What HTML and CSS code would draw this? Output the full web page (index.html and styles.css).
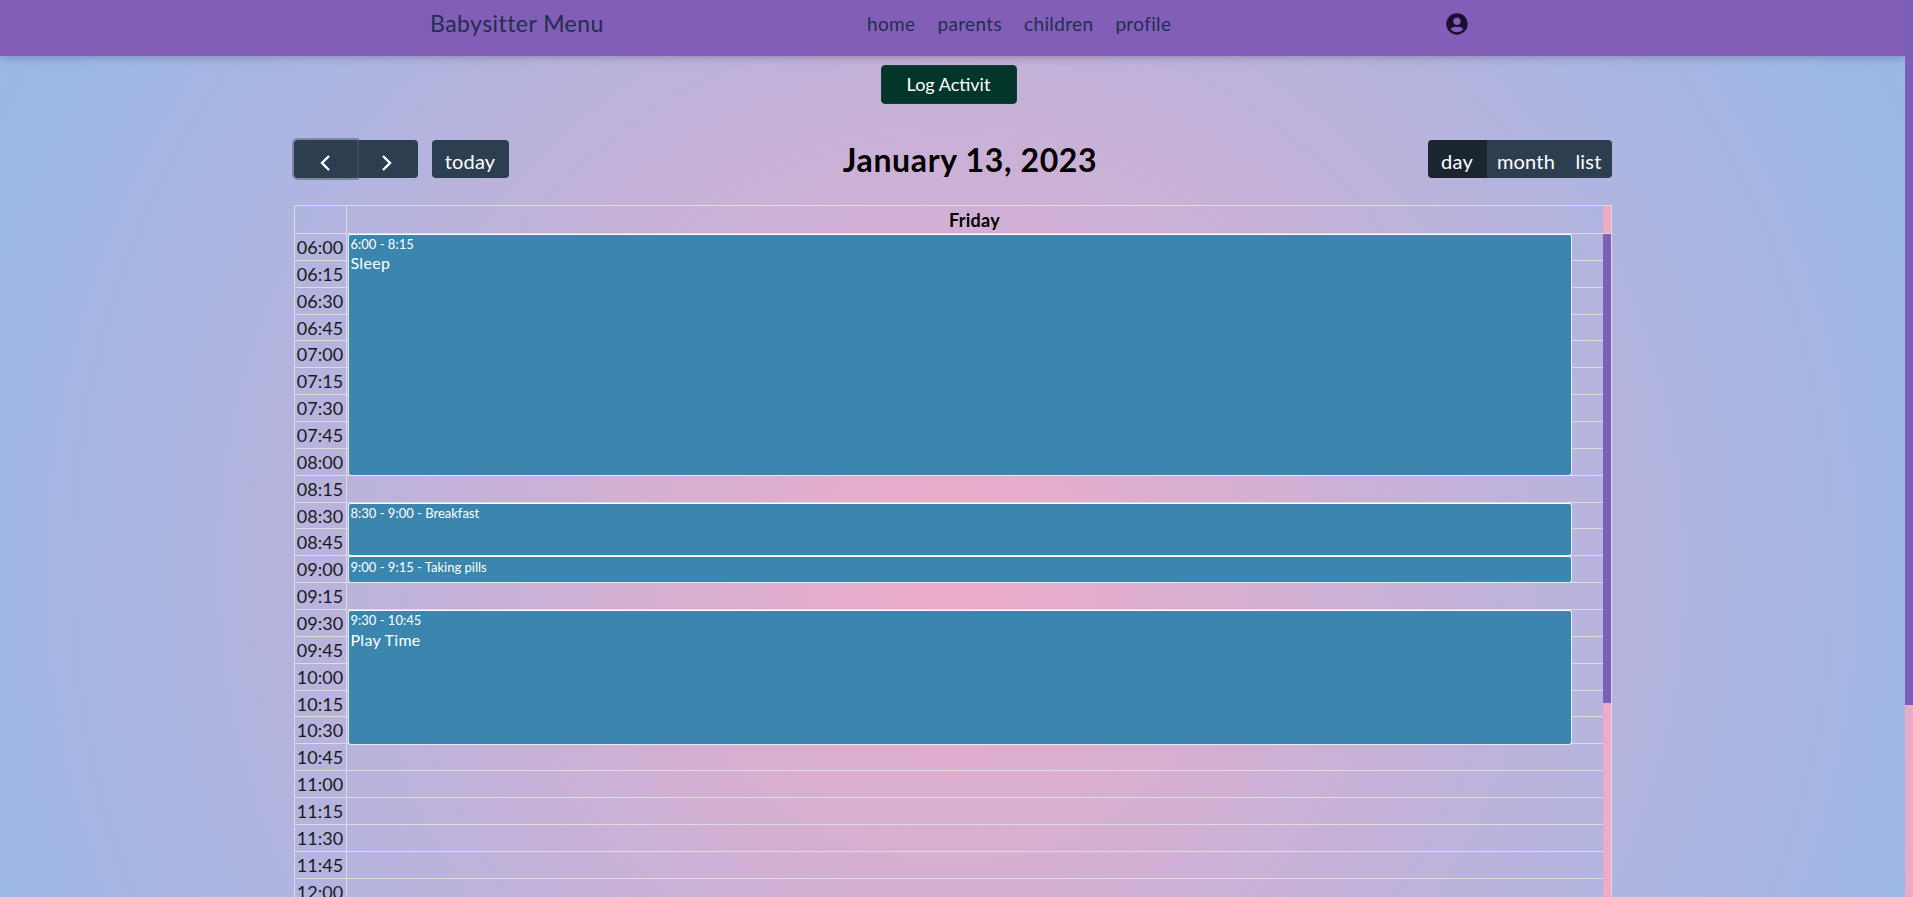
FILE: index.html
```html
<!DOCTYPE html>
<html lang="en">
<head>
<meta charset="utf-8">
<title>Babysitter Menu</title>
<link rel="stylesheet" href="styles.css">
</head>
<body>
<div class="content">
<nav class="navbar">
  <a class="brand">Babysitter Menu</a>
  <ul class="nav-links">
    <li>home</li><li>parents</li><li>children</li><li>profile</li>
  </ul>
  <svg class="user-icon" viewBox="0 0 496 512"><path d="M248 8C111 8 0 119 0 256s111 248 248 248 248-111 248-248S385 8 248 8zm0 96c48.6 0 88 39.4 88 88s-39.4 88-88 88-88-39.4-88-88 39.4-88 88-88zm0 344c-58.7 0-111.3-26.6-146.5-68.2 18.8-35.4 55.6-59.8 98.5-59.8 2.4 0 4.8.4 7.1 1.1 13 4.2 26.6 6.9 40.9 6.9 14.3 0 28-2.7 40.9-6.9 2.3-.7 4.7-1.1 7.1-1.1 42.9 0 79.7 24.4 98.5 59.8C359.3 421.4 306.7 448 248 448z"/></svg>
</nav>
<main class="page">
  <div class="log-row"><button class="log-btn">Log Activit</button></div>
  <section class="calendar">
    <div class="toolbar">
      <div class="tool-left">
        <div class="btn-group">
          <button class="btn btn-arrow btn-focus"><svg viewBox="0 0 12 18"><path d="M10 2 3 9l7 7"/></svg></button>
          <button class="btn btn-arrow"><svg viewBox="0 0 12 18"><path d="m2 2 7 7-7 7"/></svg></button>
        </div>
        <button class="btn btn-today">today</button>
      </div>
      <h2 class="title">January 13, 2023</h2>
      <div class="btn-group tool-right">
        <button class="btn btn-active btn-day">day</button>
        <button class="btn btn-month">month</button>
        <button class="btn btn-list">list</button>
      </div>
    </div>
    <div class="grid">
      <div class="head">
        <div class="head-axis"></div>
        <div class="head-day">Friday</div>
        <div class="head-gutter"></div>
      </div>
      <div class="scroller">
        <div class="rows">
          <div class="row"><span class="time">06:00</span><span class="slot"></span></div>
          <div class="row"><span class="time">06:15</span><span class="slot"></span></div>
          <div class="row"><span class="time">06:30</span><span class="slot"></span></div>
          <div class="row"><span class="time">06:45</span><span class="slot"></span></div>
          <div class="row"><span class="time">07:00</span><span class="slot"></span></div>
          <div class="row"><span class="time">07:15</span><span class="slot"></span></div>
          <div class="row"><span class="time">07:30</span><span class="slot"></span></div>
          <div class="row"><span class="time">07:45</span><span class="slot"></span></div>
          <div class="row"><span class="time">08:00</span><span class="slot"></span></div>
          <div class="row"><span class="time">08:15</span><span class="slot"></span></div>
          <div class="row"><span class="time">08:30</span><span class="slot"></span></div>
          <div class="row"><span class="time">08:45</span><span class="slot"></span></div>
          <div class="row"><span class="time">09:00</span><span class="slot"></span></div>
          <div class="row"><span class="time">09:15</span><span class="slot"></span></div>
          <div class="row"><span class="time">09:30</span><span class="slot"></span></div>
          <div class="row"><span class="time">09:45</span><span class="slot"></span></div>
          <div class="row"><span class="time">10:00</span><span class="slot"></span></div>
          <div class="row"><span class="time">10:15</span><span class="slot"></span></div>
          <div class="row"><span class="time">10:30</span><span class="slot"></span></div>
          <div class="row"><span class="time">10:45</span><span class="slot"></span></div>
          <div class="row"><span class="time">11:00</span><span class="slot"></span></div>
          <div class="row"><span class="time">11:15</span><span class="slot"></span></div>
          <div class="row"><span class="time">11:30</span><span class="slot"></span></div>
          <div class="row"><span class="time">11:45</span><span class="slot"></span></div>
          <div class="row"><span class="time">12:00</span><span class="slot"></span></div>
          <div class="event ev-sleep"><div class="ev-time">6:00 - 8:15</div><div class="ev-title">Sleep</div></div>
          <div class="event ev-breakfast"><div class="ev-time">8:30 - 9:00 - Breakfast</div></div>
          <div class="event ev-pills"><div class="ev-time">9:00 - 9:15 - Taking pills</div></div>
          <div class="event ev-play"><div class="ev-time">9:30 - 10:45</div><div class="ev-title ev-title-lg">Play Time</div></div>
        </div>
        <div class="track track-inner"><div class="thumb thumb-inner"></div></div>
      </div>
    </div>
  </section>
</main>
</div>
<div class="track track-page"><div class="thumb thumb-page"></div></div>
</body>
</html>
```
FILE: styles.css
```css
* { box-sizing: border-box; }
html, body { height: 100%; }
body {
  margin: 0;
  overflow: hidden;
  font-family: "Lato", "Open Sans", sans-serif;
  color: #000;
  background: radial-gradient(circle 1113px at 952px 570px, #efabc8 0%, #b5b4de 60%, #96b9e8 100%);
  display: flex;
}
.content { flex: 1; min-width: 0; }
.track { background: #eeabc7; width: 8px; }
.thumb { background: #7c60b8; }
.track-page { flex: none; }
.thumb-page { height: 705px; }
.thumb-inner { height: 469px; }
.navbar {
  height: 56px;
  background: #825eb9;
  box-shadow: 0 2px 8px rgba(60, 50, 90, .3);
  display: flex;
  align-items: center;
  padding: 0 0 10px 430px;
  color: #1f2e4e;
}
.brand { font-size: 23px; letter-spacing: .45px; width: 437px; }
.nav-links {
  list-style: none; margin: 0; padding: 0;
  display: flex; gap: 22px;
  font-size: 19px; letter-spacing: .35px;
  width: 579px;
}
.user-icon { width: 22px; height: 22px; fill: #1a0f2e; margin-top: 1px; }
.page { width: 1318px; margin: 0 auto; }
.log-row { display: flex; justify-content: center; padding: 9px 8px 0 0; }
.log-btn {
  width: 136px; height: 39px;
  background: #03352b; color: #fff;
  border: 1px solid #0a4034; border-radius: 4px;
  padding-bottom: 3px;
  font: 18px "Lato", sans-serif;
}
.toolbar {
  margin-top: 36px;
  height: 38px;
  display: flex; align-items: center; justify-content: space-between;
}
.tool-left { display: flex; gap: 14px; }
.btn-group { display: flex; }
.btn {
  height: 38px; border: 0; padding: 3px 0 0;
  background: #2c3e50; color: #fff;
  font: 20px "Lato", sans-serif;
  letter-spacing: .2px;
  border-radius: 4px;
}
.btn-group .btn { border-radius: 0; }
.btn-group .btn:first-child { border-radius: 4px 0 0 4px; }
.btn-group .btn:last-child { border-radius: 0 4px 4px 0; }
.btn-arrow { width: 61px; display: flex; align-items: center; justify-content: center; padding-top: 7px; }
.btn-arrow svg { width: 12px; height: 18px; fill: none; stroke: #fff; stroke-width: 2.4; }
.btn-arrow.btn-focus { width: 63px; box-shadow: 0 0 0 2px rgba(76, 91, 106, .5); position: relative; }
.btn-today { width: 77px; }
.btn-active { background: #1a252f; }
.btn-day { width: 59px; }
.btn-month { width: 79px; }
.btn-list { width: 46px; }
.title {
  margin: 0; font-size: 32px; font-weight: 700; letter-spacing: .65px;
  position: relative; left: 2px;
}
.grid { margin-top: 27px; border: solid #ddd; border-width: 1px 1px 0 1px; }
.head { display: flex; height: 28px; border-bottom: 1px solid #ddd; }
.head-axis { width: 52px; border-right: 1px solid #ddd; }
.head-day { flex: 1; text-align: center; font-weight: 700; font-size: 18px; line-height: 29px; letter-spacing: .3px; }
.head-gutter { width: 8px; background: #eeabc7; }
.scroller { height: 664px; display: flex; overflow: hidden; }
.rows { position: relative; flex: 1; min-width: 0; }
.row { display: flex; height: 26.86px; border-bottom: 1px solid #ddd; }
.time {
  width: 52px; border-right: 1px solid #ddd;
  font-size: 18px; color: #1a1a1a; text-align: center; line-height: 26px;
  white-space: nowrap;
}
.slot { flex: 1; }
.event {
  position: absolute; left: 53px; width: 1224px;
  background: #3a86ae; color: #fff;
  border: 1px solid #e4ecf2; border-top-color: #fff;
  border-radius: 3px;
  padding: 1px 2px;
}
.ev-time { font-size: 13px; line-height: 17px; }
.ev-title { font-size: 16px; line-height: 20px; letter-spacing: .3px; }
.ev-title-lg { margin-top: 1px; }
.ev-sleep { top: 0; height: 242px; }
.ev-breakfast { top: 269px; height: 53px; }
.ev-pills { top: 322px; height: 27px; padding-top: 2px; }
.ev-play { top: 376px; height: 135px; }
```
